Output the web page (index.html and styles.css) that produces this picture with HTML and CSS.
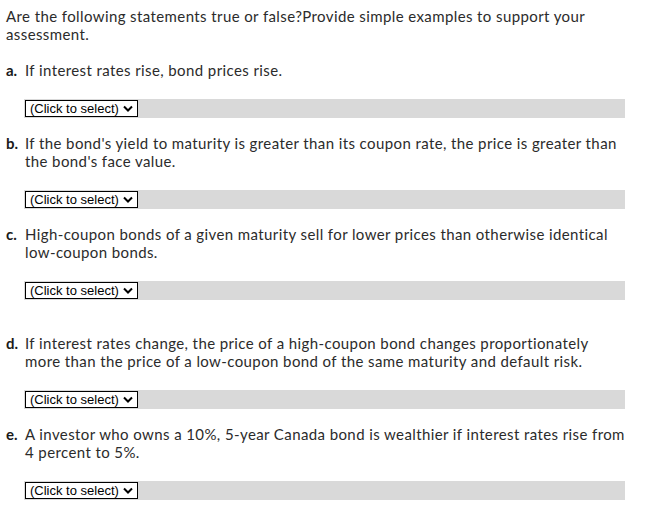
FILE: index.html
```html
<!DOCTYPE html>
<html lang="en">
<head>
    <meta charset="UTF-8">
    <title>Bond Statements</title>
    <link rel="stylesheet" href="styles.css">
</head>
<body>
    <div class="question">
        <p class="intro">Are the following statements true or false?Provide simple examples to support your assessment.</p>

        <div class="item">
            <span class="letter">a.</span>
            <span class="text">If interest rates rise, bond prices rise.</span>
        </div>
        <div class="answer">
            <span class="select">(Click to select)
                <svg width="10" height="7" viewBox="0 0 10 7"><path d="M1 1.5 L5 5.5 L9 1.5" fill="none" stroke="#000" stroke-width="2"/></svg>
            </span>
        </div>

        <div class="item">
            <span class="letter">b.</span>
            <span class="text">If the bond's yield to maturity is greater than its coupon rate, the price is greater than the bond's face value.</span>
        </div>
        <div class="answer">
            <span class="select">(Click to select)
                <svg width="10" height="7" viewBox="0 0 10 7"><path d="M1 1.5 L5 5.5 L9 1.5" fill="none" stroke="#000" stroke-width="2"/></svg>
            </span>
        </div>

        <div class="item">
            <span class="letter">c.</span>
            <span class="text">High-coupon bonds of a given maturity sell for lower prices than otherwise identical low-coupon bonds.</span>
        </div>
        <div class="answer">
            <span class="select">(Click to select)
                <svg width="10" height="7" viewBox="0 0 10 7"><path d="M1 1.5 L5 5.5 L9 1.5" fill="none" stroke="#000" stroke-width="2"/></svg>
            </span>
        </div>
        <div class="spacer"></div>

        <div class="item">
            <span class="letter">d.</span>
            <span class="text">If interest rates change, the price of a high-coupon bond changes proportionately more than the price of a low-coupon bond of the same maturity and default risk.</span>
        </div>
        <div class="answer">
            <span class="select">(Click to select)
                <svg width="10" height="7" viewBox="0 0 10 7"><path d="M1 1.5 L5 5.5 L9 1.5" fill="none" stroke="#000" stroke-width="2"/></svg>
            </span>
        </div>

        <div class="item">
            <span class="letter">e.</span>
            <span class="text">A investor who owns a 10%, 5-year Canada bond is wealthier if interest rates rise from 4 percent to 5%.</span>
        </div>
        <div class="answer">
            <span class="select">(Click to select)
                <svg width="10" height="7" viewBox="0 0 10 7"><path d="M1 1.5 L5 5.5 L9 1.5" fill="none" stroke="#000" stroke-width="2"/></svg>
            </span>
        </div>
    </div>
</body>
</html>
```

FILE: styles.css
```css
body {
    margin: 0;
    padding: 7px 0 0 6px;
    background: white;
    font-family: Lato, "Open Sans", sans-serif;
    font-size: 15px;
    line-height: 18px;
    letter-spacing: 0.4px;
    color: #2b2b2b;
}
.question {
    width: 620px;
}
.intro {
    margin: 0 0 18px 0;
}
.item {
    display: flex;
}
.letter {
    width: 19px;
    flex-shrink: 0;
    font-weight: bold;
    letter-spacing: 0;
    color: #1a1a1a;
}
.text {
    flex: 1;
}
.answer {
    margin: 20px 0 16px 18px;
    width: 601px;
    height: 19px;
    background: #d9d9d9;
    display: flex;
    align-items: center;
}
.select {
    display: inline-flex;
    align-items: center;
    gap: 4px;
    height: 17px;
    margin-left: 1px;
    padding: 0 4px 0 4px;
    border: 1px solid #000;
    background: white;
    font-family: "Liberation Sans", Arial, sans-serif;
    font-size: 13px;
    letter-spacing: 0;
    color: #000;
    box-sizing: border-box;
}
.spacer {
    height: 18px;
}
```
